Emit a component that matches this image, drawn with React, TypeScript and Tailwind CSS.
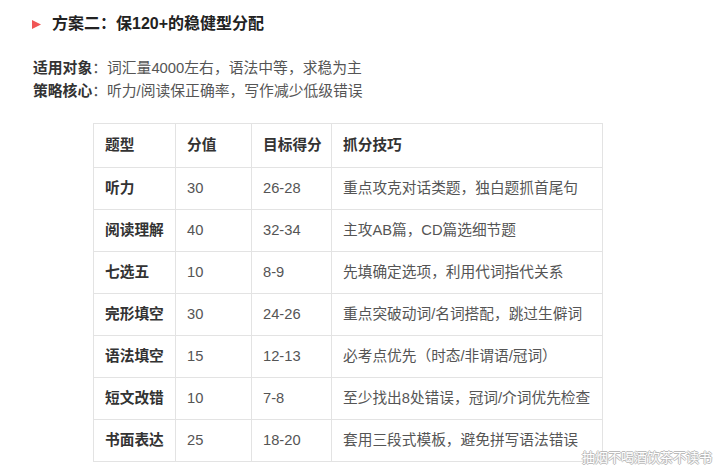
import React from "react";

const rows: [string, string, string, string][] = [
  ["听力", "30", "26-28", "重点攻克对话类题，独白题抓首尾句"],
  ["阅读理解", "40", "32-34", "主攻AB篇，CD篇选细节题"],
  ["七选五", "10", "8-9", "先填确定选项，利用代词指代关系"],
  ["完形填空", "30", "24-26", "重点突破动词/名词搭配，跳过生僻词"],
  ["语法填空", "15", "12-13", "必考点优先（时态/非谓语/冠词）"],
  ["短文改错", "10", "7-8", "至少找出8处错误，冠词/介词优先检查"],
  ["书面表达", "25", "18-20", "套用三段式模板，避免拼写语法错误"],
];

export default function App() {
  return (
    <div
      className="relative w-[719px] h-[473px] overflow-hidden bg-white pl-[32px] pt-[12px]"
      style={{ fontFamily: '"Liberation Sans", "Noto Sans CJK SC", sans-serif' }}
    >
      <div className="flex items-center h-[24px]">
        <svg width="10" height="9" viewBox="0 0 10 9" className="mr-[10px]">
          <polygon points="0,0 9,4.5 0,9" fill="#f05656" />
        </svg>
        <span className="text-[16px] font-bold text-[#222]">方案二：保120+的稳健型分配</span>
      </div>
      <div className="mt-[21px] text-[14.8px] leading-[23px] text-[#555]">
        <div className="pl-[1px]">
          <span className="font-bold text-[#333]">适用对象</span>：词汇量4000左右，语法中等，求稳为主
        </div>
        <div className="pl-[1px]">
          <span className="font-bold text-[#333]">策略核心</span>：听力/阅读保正确率，写作减少低级错误
        </div>
      </div>
      <table className="mt-[20px] ml-[61px] border-collapse table-fixed w-[509px] text-[14.7px]">
        <colgroup>
          <col className="w-[82px]" />
          <col className="w-[76px]" />
          <col className="w-[80px]" />
          <col className="w-[271px]" />
        </colgroup>
        <thead>
          <tr className="h-[44px]">
            {["题型", "分值", "目标得分", "抓分技巧"].map((h) => (
              <th
                key={h}
                className="border border-[#e3e3e3] pl-[11px] text-left font-bold text-[#333] whitespace-nowrap"
              >
                {h}
              </th>
            ))}
          </tr>
        </thead>
        <tbody>
          {rows.map((r) => (
            <tr key={r[0]} className="h-[42px]">
              <td className="border border-[#e3e3e3] pl-[11px] font-bold text-[#333] whitespace-nowrap">{r[0]}</td>
              <td className="border border-[#e3e3e3] pl-[11px] text-[#555]">{r[1]}</td>
              <td className="border border-[#e3e3e3] pl-[11px] text-[#555]">{r[2]}</td>
              <td className="border border-[#e3e3e3] pl-[11px] text-[#555] whitespace-nowrap">{r[3]}</td>
            </tr>
          ))}
        </tbody>
      </table>
      <div
        className="absolute left-[582px] top-[450px] text-[13px] leading-[16px] text-white whitespace-nowrap"
        style={{
          textShadow:
            "1px 0 0 #bbb, -1px 0 0 #bbb, 0 1px 0 #bbb, 0 -1px 0 #bbb",
        }}
      >
        抽烟不喝酒饮茶不读书
      </div>
    </div>
  );
}
